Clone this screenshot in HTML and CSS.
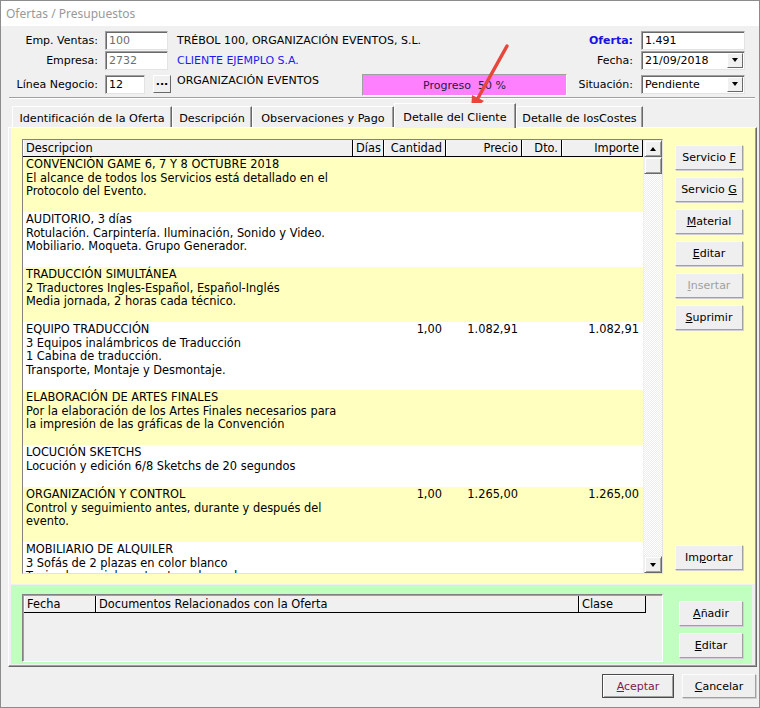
FILE: index.html
```html
<!DOCTYPE html>
<html lang="es">
<head>
    <meta charset="UTF-8">
    <title>Ofertas / Presupuestos</title>
    <link rel="stylesheet" href="styles.css">
</head>
<body>
<div class="window">
    <div class="titlebar">Ofertas / Presupuestos</div>

    <!-- cabecera de la oferta -->
    <div class="header">
        <div class="hrow">
            <span class="lbl">Emp. Ventas:</span>
            <span class="field w63 disabled">100</span>
            <span class="htext">TRÉBOL 100, ORGANIZACIÓN EVENTOS, S.L.</span>
            <span class="rlbl oferta">Oferta:</span>
            <span class="field w104">1.491</span>
        </div>
        <div class="hrow">
            <span class="lbl">Empresa:</span>
            <span class="field w63 disabled">2732</span>
            <span class="htext blue">CLIENTE EJEMPLO S.A.</span>
            <span class="rlbl">Fecha:</span>
            <span class="field w104 combo">21/09/2018<span class="drop"><i class="tri-down"></i></span></span>
        </div>
        <div class="hrow hrow3">
            <span class="lbl">Línea Negocio:</span>
            <span class="field w40">12</span>
            <span class="dots">...</span>
            <span class="htext fixed">ORGANIZACIÓN EVENTOS</span>
            <span class="progress">Progreso  50 %</span>
            <span class="rlbl grow">Situación:</span>
            <span class="field w104 combo">Pendiente<span class="drop"><i class="tri-down"></i></span></span>
        </div>
    </div>
    <div class="sep"></div>

    <!-- pestañas -->
    <div class="tabs">
        <div class="tabstrip">
            <div class="tab t1">Identificación de la Oferta</div>
            <div class="tab t2">Descripción</div>
            <div class="tab t3">Observaciones y Pago</div>
            <div class="tab t4 active">Detalle del Cliente</div>
            <div class="tab t5">Detalle de losCostes</div>
        </div>
        <div class="page">
            <div class="yellow">
                <div class="grid">
                    <div class="gbody">
                        <div class="grow-h">
                            <div class="hc">Descripcion</div>
                            <div class="hc r">Días</div>
                            <div class="hc r">Cantidad</div>
                            <div class="hc r">Precio</div>
                            <div class="hc r">Dto.</div>
                            <div class="hc r">Importe</div>
                        </div>
                        <div class="drow odd h55">
                            <div class="dc">CONVENCIÓN GAME 6, 7 Y 8 OCTUBRE 2018
El alcance de todos los Servicios está detallado en el
Protocolo del Evento.</div>
                            <div class="nc"></div><div class="nc"></div><div class="nc"></div><div class="nc"></div><div class="nc"></div>
                        </div>
                        <div class="drow h55">
                            <div class="dc">AUDITORIO, 3 días
Rotulación. Carpintería. Iluminación, Sonido y Video.
Mobiliario. Moqueta. Grupo Generador.</div>
                            <div class="nc"></div><div class="nc"></div><div class="nc"></div><div class="nc"></div><div class="nc"></div>
                        </div>
                        <div class="drow odd h55">
                            <div class="dc">TRADUCCIÓN SIMULTÁNEA
2 Traductores Ingles-Español, Español-Inglés
Media jornada, 2 horas cada técnico.</div>
                            <div class="nc"></div><div class="nc"></div><div class="nc"></div><div class="nc"></div><div class="nc"></div>
                        </div>
                        <div class="drow h68">
                            <div class="dc">EQUIPO TRADUCCIÓN
3 Equipos inalámbricos de Traducción
1 Cabina de traducción.
Transporte, Montaje y Desmontaje.</div>
                            <div class="nc"></div><div class="nc">1,00</div><div class="nc">1.082,91</div><div class="nc"></div><div class="nc">1.082,91</div>
                        </div>
                        <div class="drow odd h55">
                            <div class="dc">ELABORACIÓN DE ARTES FINALES
Por la elaboración de los Artes Finales necesarios para
la impresión de las gráficas de la Convención</div>
                            <div class="nc"></div><div class="nc"></div><div class="nc"></div><div class="nc"></div><div class="nc"></div>
                        </div>
                        <div class="drow h42">
                            <div class="dc">LOCUCIÓN SKETCHS
Locución y edición 6/8 Sketchs de 20 segundos</div>
                            <div class="nc"></div><div class="nc"></div><div class="nc"></div><div class="nc"></div><div class="nc"></div>
                        </div>
                        <div class="drow odd h55">
                            <div class="dc">ORGANIZACIÓN Y CONTROL
Control y seguimiento antes, durante y después del
evento.</div>
                            <div class="nc"></div><div class="nc">1,00</div><div class="nc">1.265,00</div><div class="nc"></div><div class="nc">1.265,00</div>
                        </div>
                        <div class="drow h55">
                            <div class="dc">MOBILIARIO DE ALQUILER
3 Sofás de 2 plazas en color blanco
Tapizado en piel y estructura de madera</div>
                            <div class="nc"></div><div class="nc"></div><div class="nc"></div><div class="nc"></div><div class="nc"></div>
                        </div>
                    </div>
                    <div class="vscroll">
                        <div class="sbtn"><i class="tri-up"></i></div>
                        <div class="sbtn thumb"></div>
                        <div class="strack"></div>
                        <div class="sbtn"><i class="tri-down"></i></div>
                    </div>
                </div>
                <div class="side">
                    <button class="btn">Servicio <u>F</u></button>
                    <button class="btn">Servicio <u>G</u></button>
                    <button class="btn"><u>M</u>aterial</button>
                    <button class="btn"><u>E</u>ditar</button>
                    <button class="btn off"><u>I</u>nsertar</button>
                    <button class="btn"><u>S</u>uprimir</button>
                    <button class="btn last">Im<u>p</u>ortar</button>
                </div>
            </div>
            <div class="green">
                <div class="docs">
                    <div class="docs-h">
                        <div class="hc">Fecha</div>
                        <div class="hc">Documentos Relacionados con la Oferta</div>
                        <div class="hc">Clase</div>
                    </div>
                </div>
                <div class="side side2">
                    <button class="btn"><u>A</u>ñadir</button>
                    <button class="btn"><u>E</u>ditar</button>
                </div>
            </div>
        </div>
    </div>

    <!-- botones inferiores -->
    <div class="footer">
        <button class="btn fbtn default"><u>A</u>ceptar</button>
        <button class="btn fbtn"><u>C</u>ancelar</button>
    </div>

    <!-- flecha roja de la captura -->
    <svg class="arrow" width="760" height="708" viewBox="0 0 760 708">
        <line x1="507" y1="46" x2="478" y2="98" stroke="#e8463b" stroke-width="3.5" stroke-linecap="round"/>
        <polygon points="471,111 484,101 472,95" fill="#e8463b"/>
    </svg>
</div>
</body>
</html>
```

FILE: styles.css
```css
/* base */
* {
    box-sizing: border-box;
}

body {
    margin: 0;
    font-family: "DejaVu Sans", Verdana, sans-serif;
    font-size: 11px;
    color: #000;
    background: #f0f0f0;
}

/* ventana */
.window {
    position: relative;
    width: 760px;
    height: 708px;
    border: 1px solid #8c8c8c;
    background: #f0f0f0;
    overflow: hidden;
}

.titlebar {
    height: 25px;
    background: #fff;
    color: #999;
    font-family: "Noto Sans", "Open Sans", sans-serif;
    font-size: 12px;
    line-height: 25px;
    padding-left: 5px;
}

/* cabecera */
.header {
    height: 70px;
    padding: 4px 14px 0 0;
}

.hrow {
    display: flex;
    align-items: center;
    height: 20px;
}
.hrow3 {
    height: 22px;
    margin-top: 3px;
}

.lbl {
    width: 99px;
    padding-right: 2px;
    text-align: right;
    white-space: nowrap;
}

.field {
    position: relative;
    height: 19px;
    margin-left: 5px;
    padding: 2px 0 0 3px;
    background: #fff;
    border: 1px solid;
    border-color: #a0a0a0 #e3e3e3 #e3e3e3 #a0a0a0;
    box-shadow: inset 1px 1px 0 #696969;
    white-space: nowrap;
    line-height: 14px;
}
.w63 { width: 63px; }
.w40 { width: 40px; }
.w104 { width: 104px; margin-left: 8px; }
.disabled { color: #6d6d6d; }

.combo .drop {
    position: absolute;
    top: 1px;
    right: 1px;
    width: 16px;
    height: 15px;
    background: #f0f0f0;
    border: 1px solid;
    border-color: #fff #696969 #696969 #fff;
    display: flex;
    align-items: center;
    justify-content: center;
}

.tri-down, .tri-up {
    display: block;
    width: 0;
    height: 0;
    border-left: 3.5px solid transparent;
    border-right: 3.5px solid transparent;
}
.tri-down { border-top: 4px solid #000; }
.tri-up { border-bottom: 4px solid #000; }

.dots {
    width: 18px;
    height: 18px;
    margin-left: 8px;
    background: #f0f0f0;
    border: 1px solid;
    border-color: #fff #696969 #696969 #fff;
    font-weight: bold;
    text-align: center;
    line-height: 12px;
}

.htext {
    flex: 1;
    margin-left: 9px;
    white-space: nowrap;
}
.htext.fixed {
    flex: none;
    width: 185px;
    margin-left: 6px;
    align-self: flex-start;
    padding-top: 1px;
}
.blue { color: #1c1cf0; }

.rlbl {
    width: 80px;
    text-align: right;
    white-space: nowrap;
}
.rlbl.grow {
    flex: 1;
    width: auto;
}
.oferta {
    color: #1414e6;
    font-weight: bold;
}

.progress {
    width: 205px;
    height: 22px;
    margin-top: 1px;
    padding-top: 1px;
    background: #ff80ff;
    border: 1px solid;
    border-color: #a0a0a0 #fff #fff #a0a0a0;
    color: #202040;
    text-align: center;
    line-height: 20px;
    white-space: pre;
}

.sep {
    margin: 1px 4px 0 8px;
    border-top: 1px solid #a0a0a0;
    border-bottom: 1px solid #fff;
}

/* pestañas */
.tabs {
    margin: 0 2px 0 7px;
}

.tabstrip {
    display: flex;
    align-items: flex-end;
    height: 28px;
    padding-left: 4px;
}

.tab {
    height: 21px;
    padding-top: 5px;
    font-size: 11.2px;
    text-align: center;
    white-space: nowrap;
    border-top: 1px solid #fff;
    border-left: 1px solid #fff;
    border-right: 1px solid #696969;
    box-shadow: inset -1px 0 0 #a0a0a0;
}
.t1 { width: 160px; }
.t2 { width: 80px; }
.t3 { width: 142px; }
.t4 { width: 122px; }
.t5 { width: 127px; }
.tab.active {
    position: relative;
    z-index: 1;
    height: 25px;
    margin-bottom: -1px;
    padding-top: 7px;
    background: #f0f0f0;
}

.page {
    height: 540px;
    border: 1px solid;
    border-color: #fff #696969 #696969 #fff;
    padding: 0 1px 2px 2px;
    box-shadow: inset -1px -1px 0 #a0a0a0;
}

/* panel amarillo */
.yellow {
    display: flex;
    height: 456px;
    padding: 11px 0 0 11px;
    background: #ffffc0;
}

.grid {
    display: flex;
    width: 641px;
    height: 435px;
    background: #fff;
    border: 1px solid;
    border-color: #828282 #e3e3e3 #e3e3e3 #828282;
    box-shadow: inset 1px 1px 0 #a0a0a0;
    font-size: 11.4px;
}

.gbody {
    width: 620px;
    overflow: hidden;
}

.grow-h, .drow {
    display: grid;
    grid-template-columns: 330px 31px 62px 76px 40px 81px;
}

.grow-h {
    height: 17px;
    background: #f0f0f0;
    border-bottom: 1px solid #000;
}

.hc {
    padding: 1px 3px 0 3px;
    border-right: 1px solid #000;
    box-shadow: inset 1px 0 0 #fff;
    white-space: nowrap;
    line-height: 14px;
}
.r { text-align: right; }

.drow { background: #fff; }
.drow.odd { background: #ffffc0; }
.h55 { height: 55px; }
.h68 { height: 68px; }
.h42 { height: 42px; }

.dc {
    padding: 1px 3px 0;
    white-space: pre-line;
    line-height: 13.6px;
}
.nc {
    padding: 1px 4px 0 0;
    text-align: right;
    line-height: 13.6px;
}

.vscroll {
    display: flex;
    flex-direction: column;
    width: 19px;
    border-left: 1px solid #f0f0f0;
    background: repeating-conic-gradient(#ececec 0 25%, #fff 0 50%) 0 0 / 2px 2px;
}
.sbtn {
    height: 17px;
    background: #f0f0f0;
    border: 1px solid;
    border-color: #f0f0f0 #696969 #696969 #f0f0f0;
    box-shadow: inset 1px 1px 0 #fff, inset -1px -1px 0 #a0a0a0;
    display: flex;
    align-items: center;
    justify-content: center;
}
.strack { flex: 1; }

/* botones */
.side {
    display: flex;
    flex-direction: column;
    gap: 7px;
    margin-left: 12px;
    padding: 6px 0 4px;
    height: 435px;
}

.btn {
    width: 68px;
    height: 25px;
    padding: 0;
    font-family: inherit;
    font-size: 11px;
    color: #000;
    background: #efefef;
    border: 1px solid;
    border-color: #fcfcfc #a0a0a0 #a0a0a0 #fcfcfc;
    box-shadow: 1px 1px 0 #d0d0d0;
    white-space: nowrap;
}
.btn.off { color: #a0a0a0; }
.btn.last { margin-top: auto; }

/* panel verde */
.green {
    display: flex;
    height: 79px;
    margin: 1px 3px 0 0;
    padding: 9px 0 0 11px;
    background: #c0ffc0;
}

.docs {
    width: 641px;
    height: 68px;
    background: #f0f0f0;
    border: 1px solid;
    border-color: #828282 #fff #fff #828282;
    box-shadow: inset 1px 1px 0 #a0a0a0;
    padding: 1px 0 0 1px;
    font-size: 11.4px;
}
.docs-h {
    display: grid;
    grid-template-columns: 72px 483px 67px;
    width: 622px;
    height: 17px;
    border-bottom: 1px solid #000;
}

.side2 {
    height: auto;
    margin-left: 16px;
    padding-top: 7px;
}
.side2 .btn { width: 64px; }

/* pie */
.footer {
    display: flex;
    justify-content: flex-end;
    gap: 8px;
    padding: 7px 3px 0 0;
}
.fbtn {
    width: 72px;
    height: 24px;
}
.fbtn + .fbtn { width: 74px; }
.fbtn.default {
    color: #7d1a4c;
    border: 1px solid #4a4a4a;
    box-shadow: inset 1px 1px 0 #fff, inset -1px -1px 0 #a0a0a0;
}

/* flecha */
.arrow {
    position: absolute;
    top: -1px;
    left: -1px;
    pointer-events: none;
}
```
